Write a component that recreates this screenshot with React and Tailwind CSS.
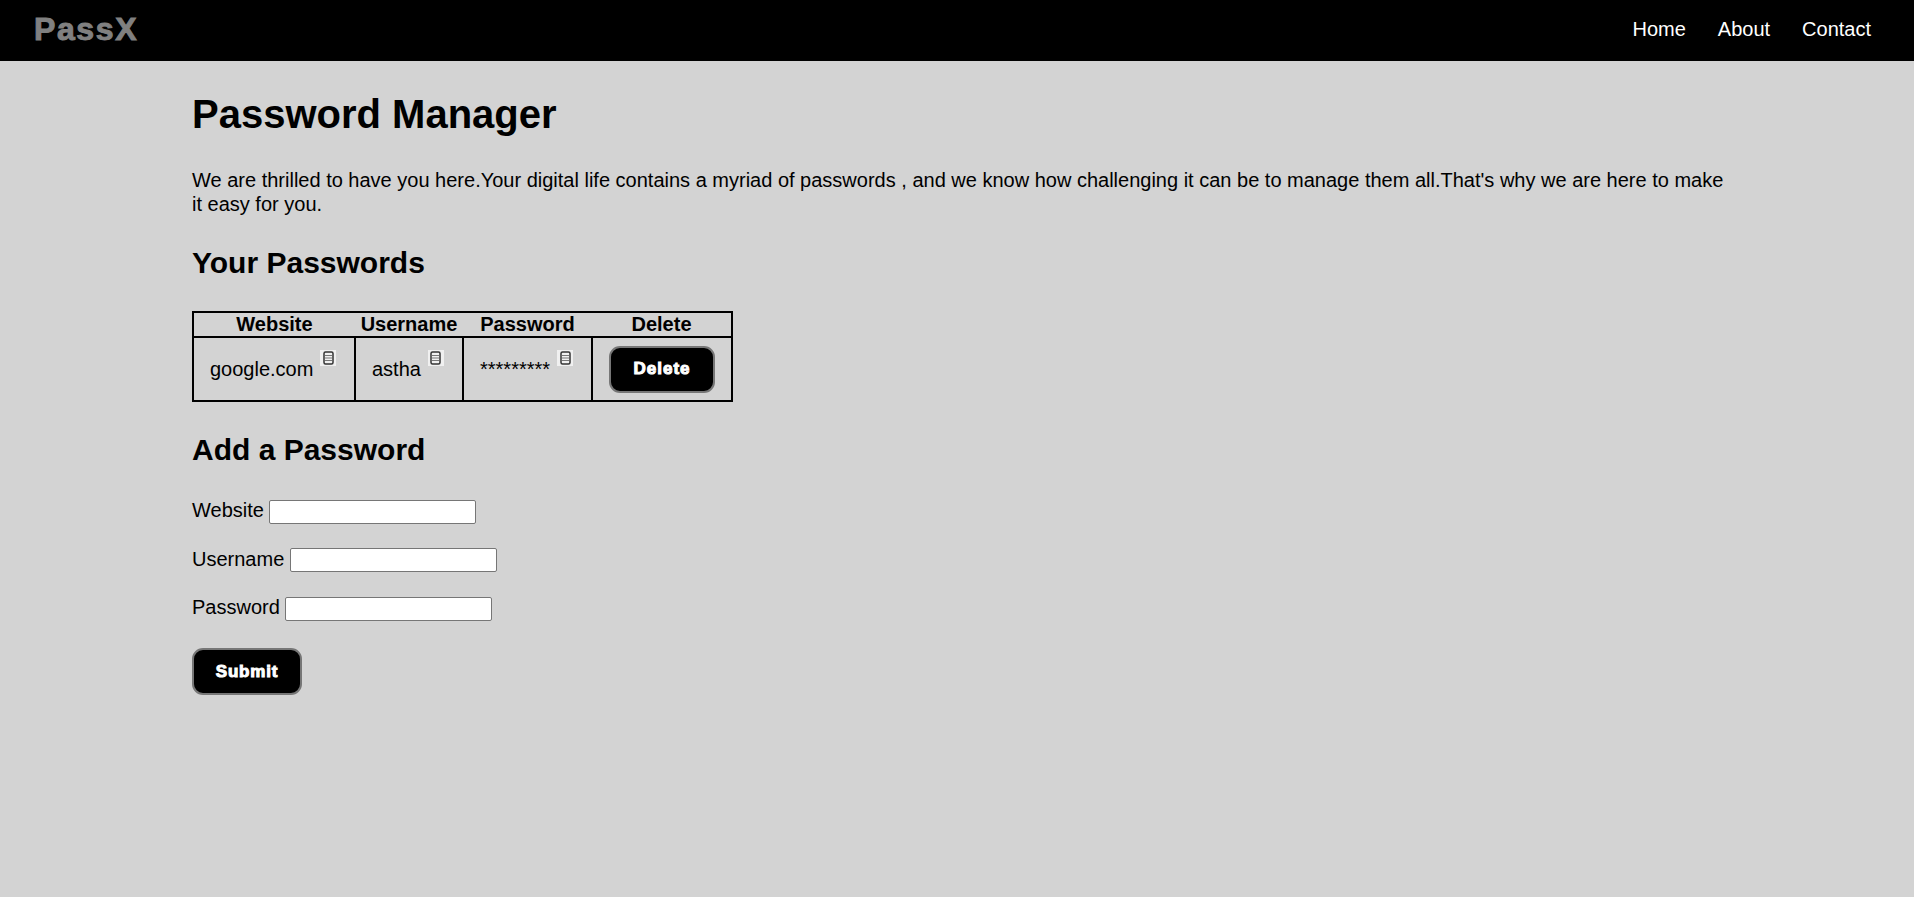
import React from "react";

const font = "font-['Liberation_Sans',Arial,sans-serif]";

const CopyIcon = () => (
  <span className="ml-[7px] inline-flex h-[16px] w-[16px] items-center justify-center bg-[#f0f0f0] align-[11px]">
    <svg width="11" height="14" viewBox="0 0 11 14" fill="none">
      <rect x="1" y="1" width="9" height="12" rx="1.5" stroke="#333" strokeWidth="1.5" />
      <path d="M2 4.5h7M2 7h7M2 9.5h7" stroke="#777" strokeWidth="1" />
    </svg>
  </span>
);

const BlackButton = ({ children, className }) => (
  <button
    className={`rounded-[11px] border-2 border-[#767676] bg-black text-[17px] font-bold text-white [-webkit-text-stroke:1px_white] ${className}`}
  >
    {children}
  </button>
);

const Field = ({ label }) => (
  <div className="mb-[23px] text-[20px] leading-[24px]">
    <label>{label}</label>{" "}
    <input
      type="text"
      className="h-[24px] w-[207px] rounded-[2px] border border-[#767676] bg-white align-middle"
    />
  </div>
);

const App = () => {
  return (
    <div className={`min-h-[897px] bg-[#d3d3d3] text-black ${font}`}>
      {/* Navbar */}
      <nav className="flex h-[61px] items-center justify-between bg-black pb-[3px] pl-[34px] pr-[43px]">
        <div className="text-[32px] font-bold tracking-[1.6px] text-[#808080] [-webkit-text-stroke:1px_#808080]">
          PassX
        </div>
        <ul className="flex gap-[32px] text-[20px] text-white">
          <li>Home</li>
          <li>About</li>
          <li>Contact</li>
        </ul>
      </nav>

      <main className="ml-[192px] w-[1536px] pt-[28px]">
        <h1 className="text-[40px] font-bold leading-[50px]">Password Manager</h1>
        <p className="mt-[29px] text-[20px] leading-[24px]">
          We are thrilled to have you here.Your digital life contains a myriad of passwords , and we
          know how challenging it can be to manage them all.That's why we are here to make it easy
          for you.
        </p>

        <h2 className="mt-[28px] text-[30px] font-bold leading-[38px]">Your Passwords</h2>
        <table className="mt-[29px] border-collapse border-2 border-black text-[20px]">
          <thead>
            <tr className="border-b-2 border-black leading-[23px]">
              <th className="w-[162px] font-bold">Website</th>
              <th className="w-[108px] font-bold">Username</th>
              <th className="w-[129px] font-bold">Password</th>
              <th className="w-[140px] font-bold">Delete</th>
            </tr>
          </thead>
          <tbody>
            <tr className="h-[64px]">
              <td className="border-r-2 border-black pb-[4px] pl-[16px]">
                google.com
                <CopyIcon />
              </td>
              <td className="border-r-2 border-black pb-[4px] pl-[16px]">
                astha
                <CopyIcon />
              </td>
              <td className="border-r-2 border-black pb-[4px] pl-[16px]">
                *********
                <CopyIcon />
              </td>
              <td className="pl-[16px]">
                <BlackButton className="block h-[47px] w-[106px] tracking-[1px]">Delete</BlackButton>
              </td>
            </tr>
          </tbody>
        </table>

        <h2 className="mt-[29px] text-[30px] font-bold leading-[38px]">Add a Password</h2>
        <form className="mt-[29px]">
          <Field label="Website" />
          <Field label="Username" />
          <Field label="Password" />
          <BlackButton className="mt-[4px] h-[47px] w-[110px] tracking-[0.8px]">Submit</BlackButton>
        </form>
      </main>
    </div>
  );
};

export default App;
